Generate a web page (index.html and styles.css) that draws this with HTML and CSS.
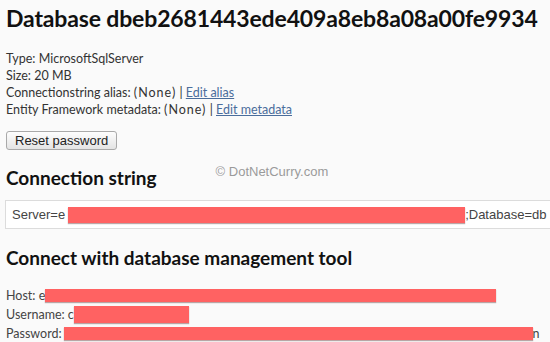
FILE: index.html
```html
<!DOCTYPE html>
<html>
<head>
<meta charset="utf-8">
<link rel="stylesheet" href="styles.css">
</head>
<body>
<div class="page">
  <h1 class="title">Database dbeb2681443ede409a8eb8a08a00fe9934</h1>
  <div class="info">
    <div class="line">Type: MicrosoftSqlServer</div>
    <div class="line">Size: 20 MB</div>
    <div class="line">Connectionstring alias: <span class="paren">(None)</span> | <a class="link" href="#">Edit alias</a></div>
    <div class="line">Entity Framework metadata: <span class="paren">(None)</span> | <a class="link" href="#">Edit metadata</a></div>
  </div>
  <div class="btnrow"><button class="btn">Reset password</button></div>
  <div class="headrow">
    <h2 class="heading">Connection string</h2>
    <span class="watermark">© DotNetCurry.com</span>
  </div>
  <div class="connbox"><span class="conntext">Server=e<span class="redact r-conn"></span>;Database=db</span></div>
  <h2 class="heading heading2">Connect with database management tool</h2>
  <div class="creds">
    <div class="cline">Host: e<span class="redact r-host"></span></div>
    <div class="cline">Username: c<span class="redact r-user"></span></div>
    <div class="cline">Password: <span class="redact r-pass"></span>n</div>
  </div>
</div>
</body>
</html>
```
FILE: styles.css
```css
html, body {
  margin: 0;
  padding: 0;
  background: #fafafa;
  overflow: hidden;
}
.page {
  width: 550px;
  height: 342px;
  overflow: hidden;
  padding: 0 0 0 6px;
  box-sizing: border-box;
  font-family: Lato, "Open Sans", sans-serif;
  color: #333;
}
.title {
  margin: 0;
  padding-top: 3px;
  font-size: 23px;
  line-height: 30px;
  font-weight: 700;
  letter-spacing: -0.15px;
  color: #111;
  white-space: nowrap;
}
.info {
  margin-top: 17px;
  font-size: 12.5px;
  line-height: 17px;
}
.line { white-space: nowrap; }
.paren { letter-spacing: 1px; }
.link { color: #4a6d9c; text-decoration: underline; }
.btnrow { margin-top: 13px; display: flex; }
.btn {
  font-family: "Liberation Sans", Arial, sans-serif;
  font-size: 13px;
  color: #222;
  height: 19px;
  padding: 0 8px;
  border: 1px solid #a9a9a9;
  border-radius: 3px;
  background: linear-gradient(#fdfdfd, #e4e4e4);
  line-height: 17px;
}
.headrow {
  display: flex;
  align-items: flex-start;
  margin-top: 16px;
}
.heading {
  margin: 0;
  font-size: 19px;
  line-height: 24px;
  font-weight: 700;
  color: #111;
  white-space: nowrap;
}
.watermark {
  margin-left: 59px;
  margin-top: -2px;
  font-family: "Liberation Sans", Arial, sans-serif;
  font-size: 13px;
  color: #9a9a9a;
}
.connbox {
  margin-top: 10px;
  margin-left: -1px;
  width: 560px;
  height: 29px;
  border: 1px solid #dcdcdc;
  background: #fff;
  box-sizing: border-box;
  padding-left: 6px;
  display: flex;
  align-items: center;
  white-space: nowrap;
  overflow: hidden;
}
.conntext {
  font-family: "Liberation Sans", Arial, sans-serif;
  font-size: 13px;
  color: #444;
  display: flex;
  align-items: center;
}
.redact {
  display: inline-block;
  background: #ff6262;
  box-shadow: 0 1px 1px rgba(120,80,80,0.5);
}
.r-conn { width: 397px; height: 16px; margin-left: 3px; }
.heading2 { margin-top: 17px; }
.creds {
  margin-top: 16px;
  font-size: 12.5px;
  line-height: 19px;
  color: #444;
}
.cline { white-space: nowrap; display: flex; align-items: center; height: 19px; }
.r-host { width: 451px; height: 13px; }
.r-user { width: 115px; height: 17px; }
.r-pass { width: 469px; height: 13px; margin-left: 2px; }
```
